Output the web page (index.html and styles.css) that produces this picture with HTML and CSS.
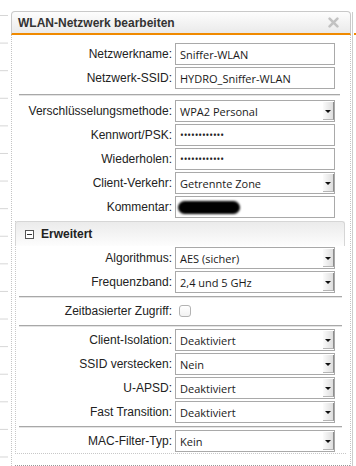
FILE: index.html
```html
<!DOCTYPE html>
<html lang="de">
<head>
<meta charset="utf-8">
<title>WLAN-Netzwerk bearbeiten</title>
<link rel="stylesheet" href="styles.css">
</head>
<body>
<div class="dialog">
  <div class="dlg-head">
    <span class="dlg-title">WLAN-Netzwerk bearbeiten</span>
    <svg class="close" width="11" height="11" viewBox="0 0 11 11"><path d="M1.6 1.6L9.4 9.4M9.4 1.6L1.6 9.4" stroke="#c2c2c2" stroke-width="2.6" stroke-linecap="round"/></svg>
  </div>
  <div class="dlg-body">
    <div class="row"><span class="lbl">Netzwerkname:</span><div class="field">Sniffer-WLAN</div></div>
    <div class="row"><span class="lbl">Netzwerk-SSID:</span><div class="field">HYDRO_Sniffer-WLAN</div></div>
    <div class="sep"></div>
    <div class="row"><span class="lbl">Verschlüsselungsmethode:</span><div class="field select"><span class="val">WPA2 Personal</span><span class="arrow"></span></div></div>
    <div class="row"><span class="lbl">Kennwort/PSK:</span><div class="field"><span class="dots">••••••••••••</span></div></div>
    <div class="row"><span class="lbl">Wiederholen:</span><div class="field"><span class="dots">••••••••••••</span></div></div>
    <div class="row"><span class="lbl">Client-Verkehr:</span><div class="field select"><span class="val">Getrennte Zone</span><span class="arrow"></span></div></div>
    <div class="row"><span class="lbl">Kommentar:</span><div class="field"><span class="redact"></span></div></div>

    <div class="fieldset">
      <div class="fs-head"><span class="toggle"></span><span class="fs-title">Erweitert</span></div>
      <div class="row"><span class="lbl">Algorithmus:</span><div class="field select"><span class="val">AES (sicher)</span><span class="arrow"></span></div></div>
      <div class="row"><span class="lbl">Frequenzband:</span><div class="field select"><span class="val">2,4 und 5 GHz</span><span class="arrow"></span></div></div>
      <div class="sep"></div>
      <div class="row"><span class="lbl">Zeitbasierter Zugriff:</span><div class="cbwrap"><span class="checkbox"></span></div></div>
      <div class="sep"></div>
      <div class="row"><span class="lbl">Client-Isolation:</span><div class="field select"><span class="val">Deaktiviert</span><span class="arrow"></span></div></div>
      <div class="row"><span class="lbl">SSID verstecken:</span><div class="field select"><span class="val">Nein</span><span class="arrow"></span></div></div>
      <div class="row"><span class="lbl">U-APSD:</span><div class="field select"><span class="val">Deaktiviert</span><span class="arrow"></span></div></div>
      <div class="row"><span class="lbl">Fast Transition:</span><div class="field select"><span class="val">Deaktiviert</span><span class="arrow"></span></div></div>
      <div class="sep"></div>
      <div class="row"><span class="lbl">MAC-Filter-Typ:</span><div class="field select"><span class="val">Kein</span><span class="arrow"></span></div></div>
    </div>
    <div class="btnbar"></div>
  </div>
</div>
</body>
</html>
```

FILE: styles.css
```css
* { box-sizing: border-box; }
html, body { margin: 0; height: 100%; }
body {
  font-family: "Liberation Sans", Arial, sans-serif;
  font-size: 12px;
  color: #222;
  padding: 11px 0 0 11px;
  overflow: hidden;
  background:
    linear-gradient(#f08a00, #f08a00) 354px 33px / 2px 2px no-repeat,
    linear-gradient(#cccccc, #cccccc) 352px 12px / 1px 100% no-repeat,
    linear-gradient(#d6d6d6 0 1px, transparent 1px) 0 15px / 8px 27.6px repeat-y,
    #fff;
}
.dialog { width: 340px; }
.dlg-head {
  height: 24px;
  border: 1px solid #c9c9c9;
  border-bottom: 2px solid #f08a00;
  border-radius: 4px 4px 0 0;
  background: linear-gradient(#fdfdfd, #eaeaea);
  display: flex;
  align-items: center;
  justify-content: space-between;
  padding: 0 11px 0 6px;
}
.dlg-title { font-weight: bold; color: #333; }
.close { display: block; }
.dlg-body {
  border-left: 1px dotted #c4c4c4;
  border-right: 1px dotted #c4c4c4;
  padding-top: 7px;
}
.row {
  display: grid;
  grid-template-columns: 160px 160px;
  column-gap: 3px;
  align-items: center;
  height: 24px;
}
.lbl { text-align: right; white-space: nowrap; line-height: 14px; }
.field {
  height: 22px;
  border: 1px solid #a9a9a9;
  background: #fff;
  display: flex;
  align-items: center;
  padding: 0 0 0 4px;
  font-family: "Open Sans", "DejaVu Sans", sans-serif;
  font-size: 11px;
  color: #1a1a1a;
  white-space: nowrap;
}
.field .val { flex: 1; }
.arrow {
  align-self: stretch;
  width: 11px;
  margin: 1px 0;
  background: linear-gradient(90deg, #fbfbfb, #dedede);
  border-right: 1px solid #8d8d8d;
  border-bottom: 1px solid #b5b5b5;
  position: relative;
}
.arrow::after {
  content: "";
  position: absolute;
  left: 2px;
  top: 8px;
  border-left: 3px solid transparent;
  border-right: 3px solid transparent;
  border-top: 3px solid #111;
}
.dots { font-size: 10px; letter-spacing: -0.1px; color: #222; }
.redact {
  display: block;
  width: 62px;
  height: 13px;
  margin-left: -2px;
  border-radius: 7px;
  background: #000;
  filter: blur(0.8px);
}
.sep {
  height: 2px;
  margin: 4px 10px 3px 7px;
  border-top: 1px solid #a8a8a8;
  border-bottom: 1px solid #e4e4e4;
}
.fieldset {
  margin: 2px 4px 0 3px;
  border-left: 1px dotted #c8c8c8;
  border-bottom: 1px dotted #c8c8c8;
}
.fieldset .row { grid-template-columns: 156px 160px; }
.fieldset .sep { margin: 2px 4px 1px 3px; }
.fs-head {
  height: 25px;
  margin: 0 1px 0 -1px;
  border: 1px solid #d6d6d6;
  border-bottom: none;
  border-radius: 3px 3px 0 0;
  background: linear-gradient(#ebebeb, #fdfdfd);
  display: flex;
  align-items: center;
  padding-left: 9px;
}
.toggle {
  width: 9px;
  height: 9px;
  border: 1px solid #555;
  margin-right: 7px;
  position: relative;
  background: #fff;
}
.toggle::after {
  content: "";
  position: absolute;
  left: 1px;
  right: 1px;
  top: 3px;
  height: 1px;
  background: #333;
}
.fs-title { font-weight: bold; color: #222; }
.cbwrap { display: flex; align-items: center; height: 22px; }
.checkbox {
  width: 12px;
  height: 12px;
  margin-left: 4px;
  border: 1px solid #b3b3b3;
  border-radius: 3px;
  background: linear-gradient(#fff, #f2f2f2);
}
.btnbar {
  margin: 11px 0 0 3px;
  height: 1px;
  border-top: 1px dotted #999;
}
```
